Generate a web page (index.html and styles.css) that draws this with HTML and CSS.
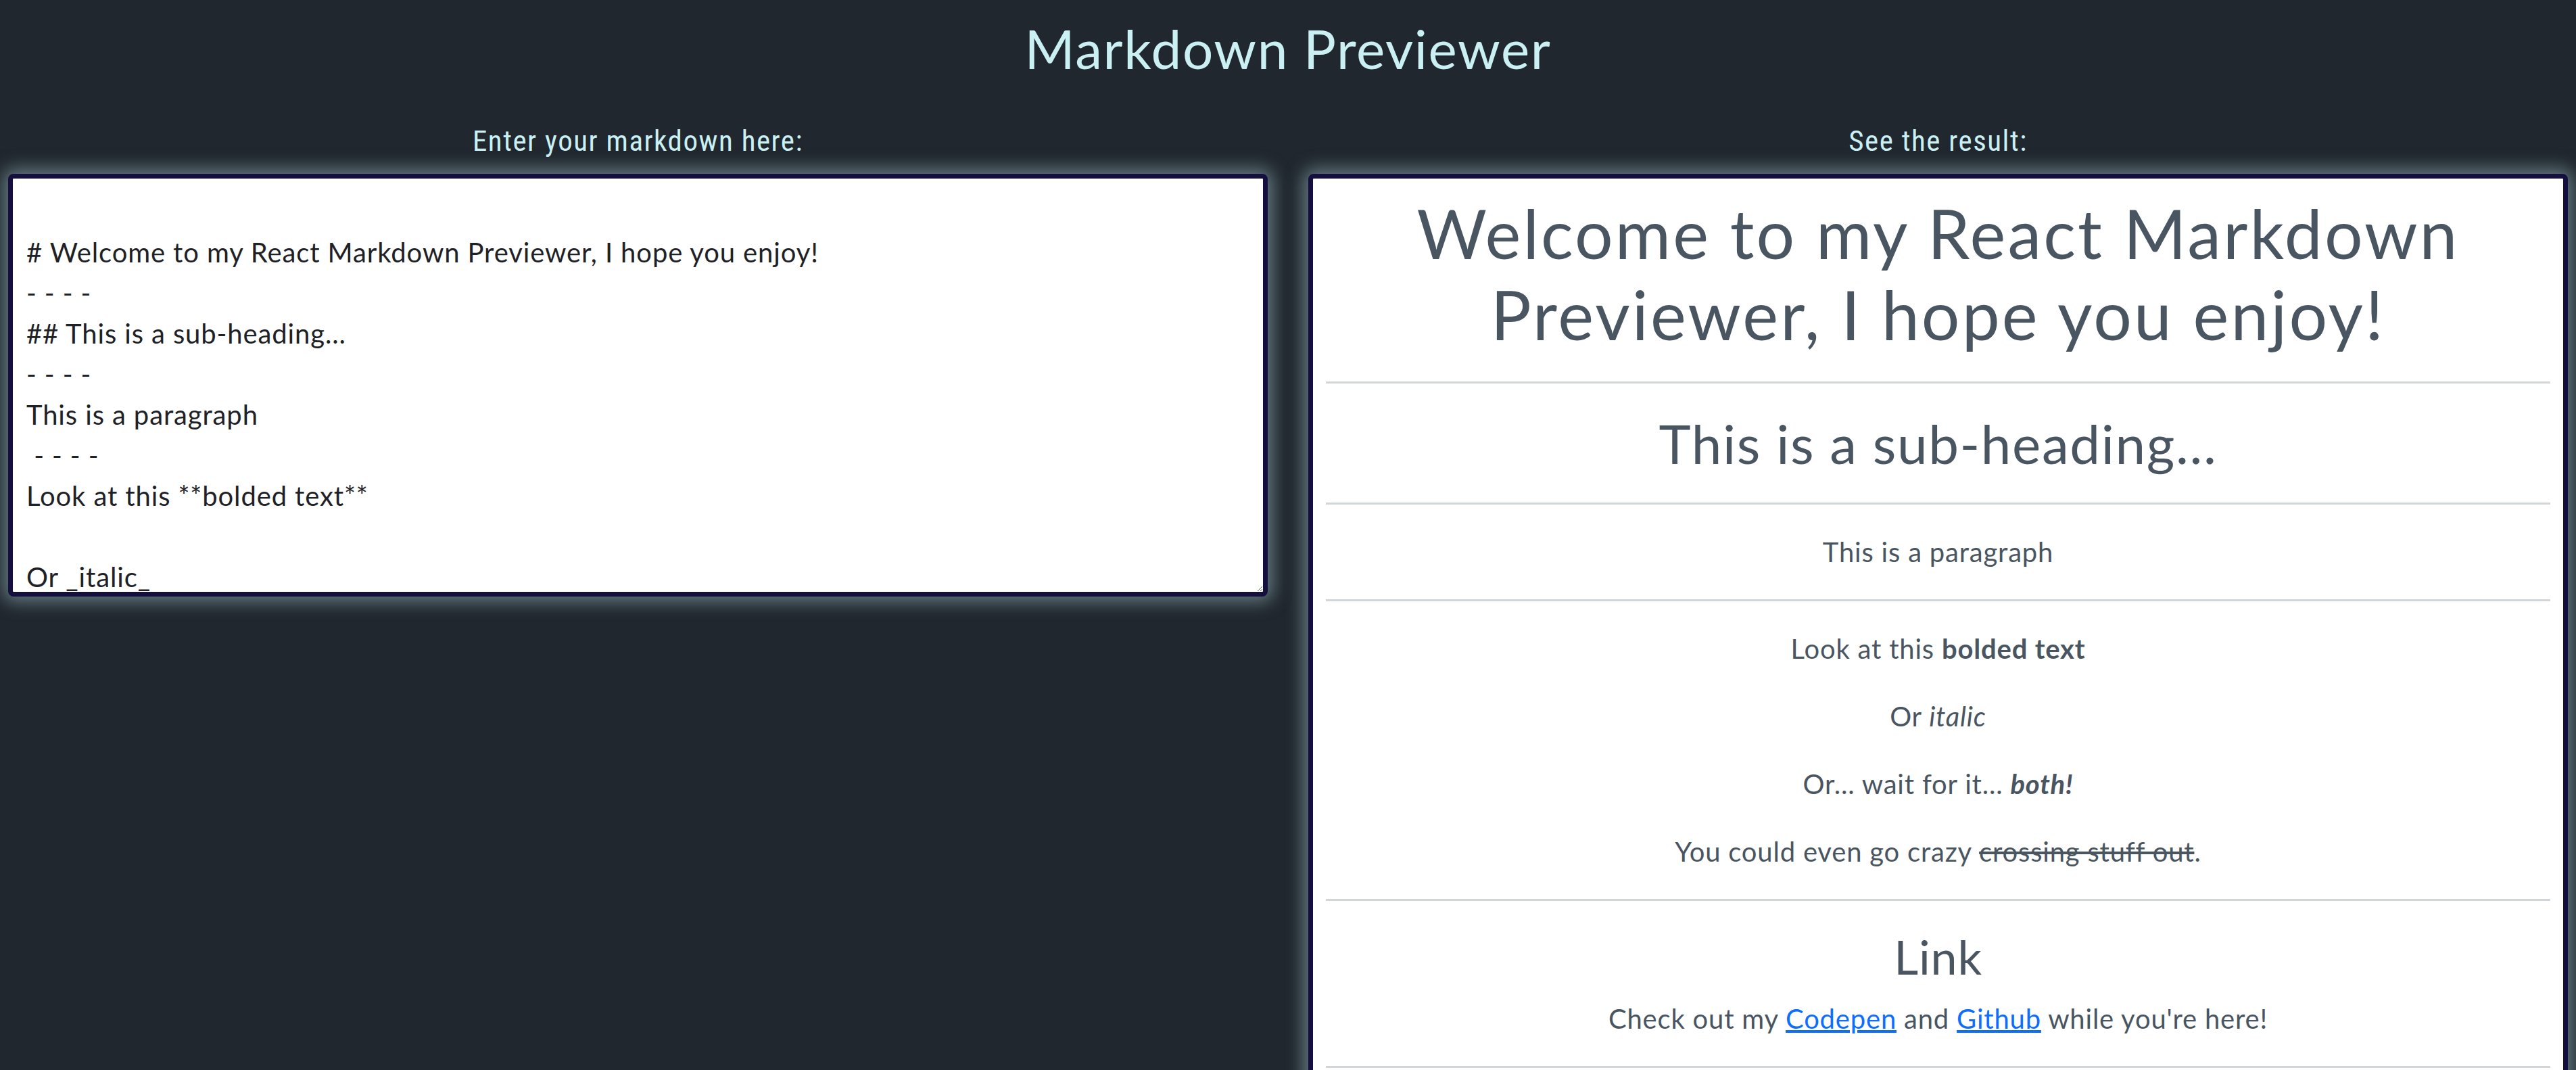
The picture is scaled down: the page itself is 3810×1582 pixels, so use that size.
FILE: index.html
```html
<!DOCTYPE html>
<html lang="en">
<head>
<meta charset="utf-8">
<title>Markdown Previewer</title>
<link rel="stylesheet" href="styles.css">
</head>
<body>
<h1 class="app-title">Markdown Previewer</h1>
<main class="workspace">
  <section class="column">
    <h2 class="column-label">Enter your markdown here:</h2>
    <textarea class="editor" spellcheck="false">

# Welcome to my React Markdown Previewer, I hope you enjoy!
- - - -
## This is a sub-heading...
- - - -
This is a paragraph
 - - - -
Look at this **bolded text**

Or _italic_

Or... wait for it... **_both!_**

You could even go crazy ~~crossing stuff out~~.
- - - -
### Link
Check out my [Codepen](https://codepen.io) and [Github](https://github.com) while you're here!
- - - -</textarea>
  </section>
  <section class="column">
    <h2 class="column-label">See the result:</h2>
    <div class="preview">
      <h1>Welcome to my React Markdown Previewer, I hope you enjoy!</h1>
      <hr>
      <h2>This is a sub-heading...</h2>
      <hr>
      <p>This is a paragraph</p>
      <hr>
      <p>Look at this <strong>bolded text</strong></p>
      <p>Or <em>italic</em></p>
      <p>Or... wait for it... <strong><em>both!</em></strong></p>
      <p>You could even go crazy <del>crossing stuff out</del>.</p>
      <hr>
      <h3>Link</h3>
      <p>Check out my <a href="#">Codepen</a> and <a href="#">Github</a> while you're here!</p>
      <hr>
    </div>
  </section>
</main>
</body>
</html>
```
FILE: styles.css
```css
html, body {
  margin: 0;
  height: 100%;
  overflow: hidden;
}

body {
  background: #20272e;
  font-family: Lato, "Open Sans", sans-serif;
  color: #212529;
}

.app-title {
  margin: 0;
  padding-top: 23px;
  font-size: 80px;
  line-height: 96px;
  font-weight: 400;
  text-align: center;
  color: #caf0f3;
  letter-spacing: 0.02em;
}

.workspace {
  display: grid;
  grid-template-columns: 1fr 1fr;
  column-gap: 60px;
  padding: 0 12px;
  align-items: start;
}

.column {
  display: flex;
  flex-direction: column;
}

.column-label {
  margin: 64px 0 24px;
  font-family: "Liberation Sans Narrow", "Roboto Condensed", Roboto, sans-serif;
  font-size: 43px;
  line-height: 50px;
  font-weight: 400;
  letter-spacing: 0.035em;
  text-align: center;
  color: #caf0f3;
}

.editor,
.preview {
  box-sizing: border-box;
  border: 7px solid #140f3f;
  border-radius: 8px;
  background: #fff;
  box-shadow: 0 0 26px 7px rgba(150, 180, 186, 0.6);
}

.editor {
  display: block;
  width: 100%;
  height: 625px;
  margin: 0;
  padding: 19px 20px;
  font-family: Lato, "Open Sans", sans-serif;
  font-size: 40px;
  line-height: 60px;
  letter-spacing: 0.022em;
  color: #1e2226;
  resize: both;
  overflow: hidden;
  outline: none;
}

.preview {
  padding: 20px 19px;
  text-align: center;
  color: #495561;
  font-size: 40px;
  line-height: 60px;
  letter-spacing: 0.02em;
}

.preview h1,
.preview h2,
.preview h3 {
  margin: 0 0 20px;
  font-weight: 400;
  line-height: 1.2;
}

.preview h1 { font-size: 100px; letter-spacing: 0.031em; }
.preview h2 { font-size: 80px; letter-spacing: 0.02em; }
.preview h3 { font-size: 70px; }

.preview p {
  margin: 0 0 40px;
}

.preview strong {
  font-weight: 700;
}

.preview hr {
  margin: 40px 0;
  border: 0;
  border-top: 3px solid #d3d6d9;
}

.preview a {
  color: #0d6efd;
  text-decoration: underline;
}
```
